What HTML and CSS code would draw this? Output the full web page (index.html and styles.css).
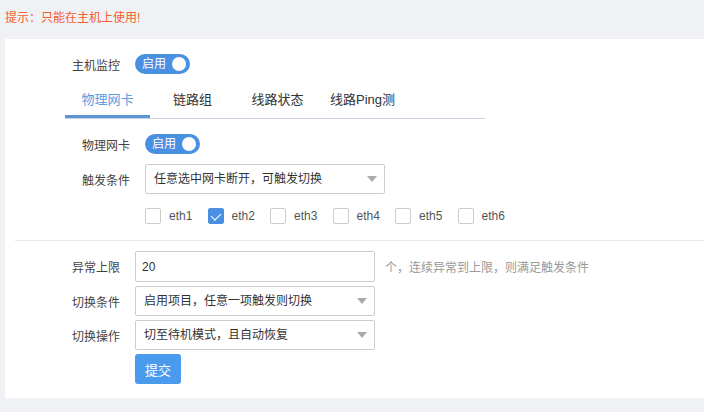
FILE: index.html
```html
<!DOCTYPE html>
<html lang="zh-CN">
<head>
    <meta charset="UTF-8">
    <title>主机监控</title>
    <link rel="stylesheet" href="styles.css">
</head>
<body>
    <div class="tip">提示：只能在主机上使用!</div>
    <div class="panel">
        <div class="row">
            <label class="label">主机监控</label>
            <div class="switch on"><span>启用</span><i></i></div>
        </div>

        <div class="tabs">
            <div class="tab active">物理网卡</div>
            <div class="tab">链路组</div>
            <div class="tab">线路状态</div>
            <div class="tab">线路Ping测</div>
        </div>

        <div class="section inner">
            <div class="row">
                <label class="label">物理网卡</label>
                <div class="switch on"><span>启用</span><i></i></div>
            </div>
            <div class="row">
                <label class="label">触发条件</label>
                <div class="select">任意选中网卡断开，可触发切换</div>
            </div>
            <div class="row checks">
                <span class="label"></span>
                <label class="check"><span class="box"></span>eth1</label>
                <label class="check"><span class="box checked"></span>eth2</label>
                <label class="check"><span class="box"></span>eth3</label>
                <label class="check"><span class="box"></span>eth4</label>
                <label class="check"><span class="box"></span>eth5</label>
                <label class="check"><span class="box"></span>eth6</label>
            </div>
        </div>

        <div class="divider"></div>

        <div class="section">
            <div class="row">
                <label class="label">异常上限</label>
                <input class="input" type="text" value="20">
                <span class="hint">个，连续异常到上限，则满足触发条件</span>
            </div>
            <div class="row">
                <label class="label">切换条件</label>
                <div class="select">启用项目，任意一项触发则切换</div>
            </div>
            <div class="row">
                <label class="label">切换操作</label>
                <div class="select">切至待机模式，且自动恢复</div>
            </div>
            <div class="row">
                <span class="label"></span>
                <button class="btn">提交</button>
            </div>
        </div>
    </div>
</body>
</html>
```

FILE: styles.css
```css
* {
    box-sizing: border-box;
    margin: 0;
    padding: 0;
}

body {
    font-family: "Liberation Sans", "Noto Sans CJK SC", sans-serif;
    font-size: 12px;
    color: #333;
    background: #f0f1f5;
    width: 704px;
    height: 412px;
    overflow: hidden;
}

.tip {
    height: 39px;
    line-height: 36px;
    padding: 0 5px;
    color: #f5602f;
    font-size: 12px;
}

.panel {
    margin-left: 5px;
    background: #fff;
    padding: 15px 0 14px 10px;
}

.row {
    display: flex;
    align-items: center;
    padding-left: 57px;
}

.section .row + .row {
    margin-top: 4px;
}

.section.inner .row {
    padding-left: 67px;
}

.section.inner .row + .row {
    margin-top: 10px;
}

.section.inner .row.checks {
    margin-top: 14px;
}

.label {
    width: 63px;
    flex-shrink: 0;
    color: #444;
}

.switch {
    position: relative;
    width: 55px;
    height: 20px;
    border-radius: 10px;
    background: #4a90e2;
    color: #fff;
    font-size: 12px;
    line-height: 20px;
    padding-left: 7px;
}

.switch i {
    position: absolute;
    right: 4px;
    top: 3px;
    width: 14px;
    height: 14px;
    border-radius: 50%;
    background: #fff;
}

.tabs {
    display: flex;
    width: 420px;
    margin: 8px 0 0 50px;
    border-bottom: 1px solid #c9d2de;
}

.tab {
    width: 85px;
    height: 36px;
    line-height: 36px;
    text-align: center;
    font-size: 13px;
    color: #333;
}

.tab.active {
    color: #5b9be0;
    border-bottom: 3px solid #5b95d8;
    margin-bottom: -2px;
}

.section.inner {
    margin-top: 15px;
}

.select {
    position: relative;
    width: 240px;
    height: 30px;
    line-height: 28px;
    border: 1px solid #ccc;
    border-radius: 2px;
    padding-left: 8px;
    color: #333;
}

.select::after {
    content: "";
    position: absolute;
    right: 7px;
    top: 11px;
    border-left: 5px solid transparent;
    border-right: 5px solid transparent;
    border-top: 6px solid #aaa;
}

.check {
    display: flex;
    align-items: center;
    width: 62.5px;
    color: #555;
}

.box {
    width: 16px;
    height: 16px;
    border: 1px solid #ccc;
    border-radius: 2px;
    margin-right: 8px;
    position: relative;
}

.box.checked {
    background: #4a90e2;
    border-color: #4a90e2;
}

.box.checked::after {
    content: "";
    position: absolute;
    left: 4px;
    top: 2px;
    width: 5px;
    height: 8px;
    border-right: 1.5px solid #fff;
    border-bottom: 1.5px solid #fff;
    transform: rotate(45deg);
}

.divider {
    height: 1px;
    background: #e8e8e8;
    margin: 16px 0 10px;
}

.input {
    width: 240px;
    height: 31px;
    border: 1px solid #ccc;
    border-radius: 2px;
    padding-left: 6px;
    font-family: "Liberation Sans", "Noto Sans CJK SC", sans-serif;
    font-size: 12px;
    color: #333;
    outline: none;
}

.hint {
    margin-left: 10px;
    color: #999;
}

.btn {
    width: 46px;
    height: 30px;
    border: none;
    border-radius: 3px;
    background: #4a9aee;
    color: #fff;
    font-family: "Liberation Sans", "Noto Sans CJK SC", sans-serif;
    font-size: 13px;
}
```
